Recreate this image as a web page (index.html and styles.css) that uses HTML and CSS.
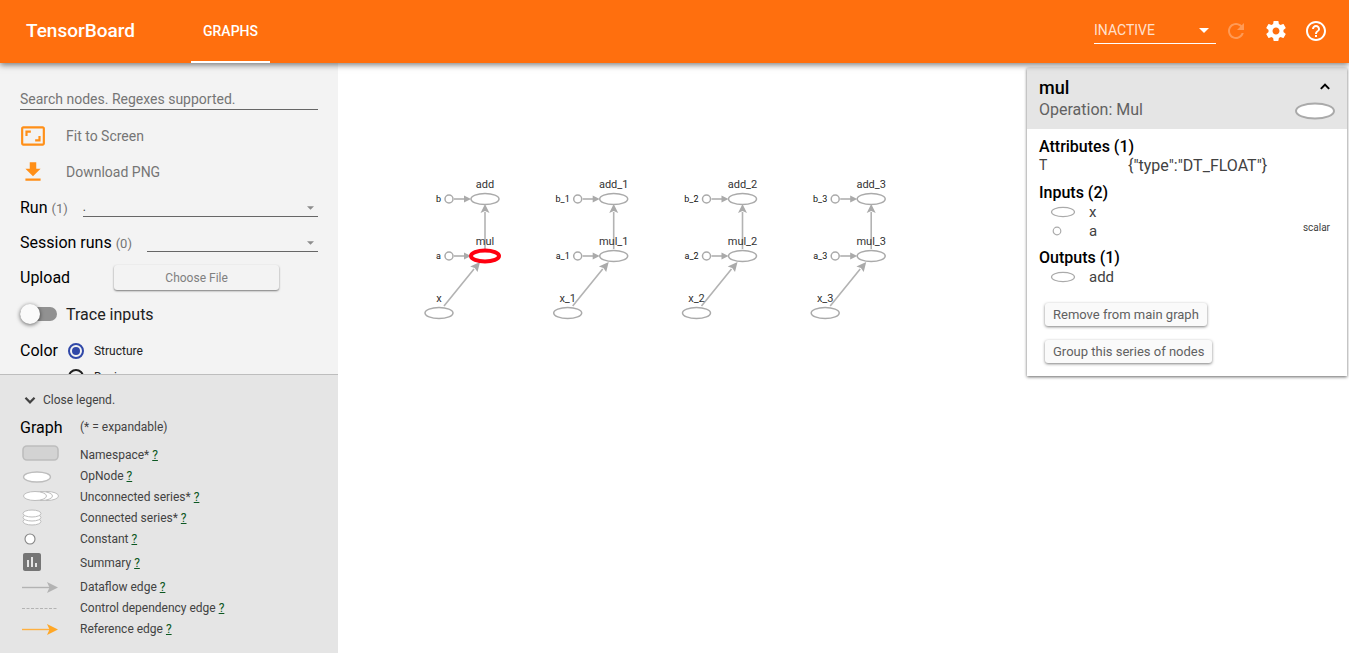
FILE: index.html
```
<!DOCTYPE html>
<html lang="en">
<head>
<meta charset="utf-8">
<title>TensorBoard</title>
<link rel="stylesheet" href="styles.css">
</head>
<body>
<header class="toolbar">
  <h1 class="brand">TensorBoard</h1>
  <nav class="tabs"><a class="tab" href="#graphs">GRAPHS</a></nav>
  <div class="toolbar-actions">
    <div class="select-wrap inactive-wrap">
      <select class="inactive-select" aria-label="Inactive dashboards"><option>INACTIVE</option></select>
      <svg class="caret" width="10" height="5" viewBox="0 0 10 5"><path d="M0 0h10L5 5z" fill="currentColor"/></svg>
    </div>
    <button class="icon-button" aria-label="Reload" disabled><svg width="24" height="24" viewBox="0 0 24 24"><path fill="currentColor" d="M17.65 6.35C16.2 4.9 14.21 4 12 4c-4.42 0-7.99 3.58-7.99 8s3.57 8 7.99 8c3.73 0 6.84-2.55 7.73-6h-2.08c-.82 2.33-3.04 4-5.65 4-3.31 0-6-2.69-6-6s2.69-6 6-6c1.66 0 3.14.69 4.22 1.78L13 11h7V4l-2.35 2.35z"/></svg></button>
    <button class="icon-button" aria-label="Settings"><svg width="24" height="24" viewBox="0 0 24 24"><path fill="currentColor" d="M19.43 12.98c.04-.32.07-.64.07-.98s-.03-.66-.07-.98l2.11-1.65c.19-.15.24-.42.12-.64l-2-3.46c-.12-.22-.39-.3-.61-.22l-2.49 1c-.52-.4-1.08-.73-1.69-.98l-.38-2.65C14.46 2.18 14.25 2 14 2h-4c-.25 0-.46.18-.49.42l-.38 2.65c-.61.25-1.17.59-1.69.98l-2.49-1c-.23-.09-.49 0-.61.22l-2 3.46c-.13.22-.07.49.12.64l2.11 1.65c-.04.32-.07.65-.07.98s.03.66.07.98l-2.11 1.65c-.19.15-.24.42-.12.64l2 3.46c.12.22.39.3.61.22l2.49-1c.52.4 1.08.73 1.69.98l.38 2.65c.03.24.24.42.49.42h4c.25 0 .46-.18.49-.42l.38-2.65c.61-.25 1.17-.59 1.69-.98l2.49 1c.23.09.49 0 .61-.22l2-3.46c.12-.22.07-.49-.12-.64l-2.11-1.65zM12 15.5c-1.93 0-3.5-1.57-3.5-3.5s1.57-3.5 3.5-3.5 3.5 1.57 3.5 3.5-1.57 3.5-3.5 3.5z"/></svg></button>
    <button class="icon-button" aria-label="Help"><svg width="24" height="24" viewBox="0 0 24 24"><path fill="currentColor" d="M11 18h2v-2h-2v2zm1-16C6.48 2 2 6.48 2 12s4.48 10 10 10 10-4.48 10-10S17.52 2 12 2zm0 18c-4.41 0-8-3.59-8-8s3.59-8 8-8 8 3.59 8 8-3.59 8-8 8zm0-14c-2.21 0-4 1.79-4 4h2c0-1.1.9-2 2-2s2 .9 2 2c0 2-3 1.75-3 5h2c0-2.25 3-2.5 3-5 0-2.21-1.79-4-4-4z"/></svg></button>
  </div>
</header>

<div class="dashboard">
  <aside class="sidebar">
    <div class="controls">
      <input class="search" type="text" aria-label="Search nodes" placeholder="Search nodes. Regexes supported.">
      <button class="action"><svg width="26" height="26" viewBox="0 0 24 24"><path fill="currentColor" d="M19 12h-2v3h-3v2h5v-5zM7 9h3V7H5v5h2V9zm14-6H3c-1.100 0-2 .9-2 2v14c0 1.100.9 2 2 2h18c1.100 0 2-.9 2-2V5c0-1.100-.9-2-2-2zm0 16.010H3V4.990h18v14.020z"/></svg>Fit to Screen</button>
      <button class="action"><svg width="26" height="26" viewBox="0 0 24 24"><path fill="currentColor" d="M19 9h-4V3H9v6H5l7 7 7-7zM5 18v2h14v-2H5z"/></svg>Download PNG</button>
      <div class="field">
        <label class="field-label" for="run">Run <span class="count">(1)</span></label>
        <div class="select-wrap run-wrap">
          <select class="picker" id="run"><option>.</option></select>
          <svg class="caret" width="7" height="4" viewBox="0 0 8 4"><path d="M0 0h8L4 4z" fill="currentColor"/></svg>
        </div>
      </div>
      <div class="field">
        <label class="field-label" for="session">Session runs <span class="count">(0)</span></label>
        <div class="select-wrap session-wrap">
          <select class="picker" id="session"><option></option></select>
          <svg class="caret" width="7" height="4" viewBox="0 0 8 4"><path d="M0 0h8L4 4z" fill="currentColor"/></svg>
        </div>
      </div>
      <div class="field upload">
        <span class="field-label">Upload</span>
        <button class="file-button">Choose File</button>
      </div>
      <label class="trace"><input class="toggle" type="checkbox" role="switch">Trace inputs</label>
      <div class="color-field">
        <span class="field-label" id="color-label">Color</span>
        <div class="radios" role="radiogroup" aria-labelledby="color-label">
          <label class="radio-row"><input class="radio" type="radio" name="color" checked>Structure</label>
          <label class="radio-row"><input class="radio" type="radio" name="color">Device</label>
        </div>
      </div>
    </div>
    <section class="legend">
      <button class="legend-toggle"><svg width="16" height="16" viewBox="0 0 24 24"><path fill="currentColor" d="M6.400 7.500L12 13.100l5.600-5.600L20 9.900l-8 8-8-8z"/></svg>Close legend.</button>
      <div class="legend-head"><h2 class="legend-title">Graph</h2><span>(* = expandable)</span></div>
      <ul class="legend-list">
        <li class="legend-item namespace"><svg class="glyph" width="40" height="19" viewBox="0 0 40 19"><rect x="3" y="2" width="35" height="14" rx="4" fill="#d3d3d3" stroke="#bdbdbd" stroke-width="1.600"/></svg><span>Namespace* <a class="help" href="#namespace">?</a></span></li>
        <li class="legend-item"><svg class="glyph" width="40" height="14" viewBox="0 0 40 14"><ellipse cx="17" cy="8" rx="13.500" ry="5" fill="#fff" stroke="#bdbdbd" stroke-width="1.300"/></svg><span>OpNode <a class="help" href="#opnode">?</a></span></li>
        <li class="legend-item"><svg class="glyph" width="40" height="14" viewBox="0 0 40 14"><g fill="#fff" stroke="#bdbdbd"><ellipse cx="27" cy="6" rx="11.500" ry="4.500"/><ellipse cx="21" cy="6" rx="11.500" ry="4.500"/><ellipse cx="15" cy="6" rx="11.500" ry="4.500"/></g></svg><span>Unconnected series* <a class="help" href="#unconnected">?</a></span></li>
        <li class="legend-item"><svg class="glyph" width="40" height="18" viewBox="0 0 40 18"><g fill="#fff" stroke="#bdbdbd"><ellipse cx="12" cy="12.500" rx="9" ry="3.500"/><ellipse cx="12" cy="8.500" rx="9" ry="3.500"/><ellipse cx="12" cy="4.500" rx="9" ry="3.500"/></g></svg><span>Connected series* <a class="help" href="#connected">?</a></span></li>
        <li class="legend-item"><svg class="glyph" width="40" height="14" viewBox="0 0 40 14"><circle cx="10" cy="7" r="5" fill="#fff" stroke="#848484" stroke-width="1.100"/></svg><span>Constant <a class="help" href="#constant">?</a></span></li>
        <li class="legend-item summary"><svg class="glyph" width="40" height="24" viewBox="0 0 40 24"><path fill="#757575" d="M19 2H5c-1.100 0-2 .9-2 2v14c0 1.100.9 2 2 2h14c1.100 0 2-.9 2-2V4c0-1.100-.9-2-2-2z"/><path fill="#e5e5e5" d="M7 9h2v7H7zM11 6h2v10h-2zM15 12h2v4h-2z"/></svg><span>Summary <a class="help" href="#summary">?</a></span></li>
        <li class="legend-item"><svg class="glyph" width="40" height="14" viewBox="0 0 40 14"><path d="M2 7.500h28" stroke="#b3b3b3" stroke-width="1.400"/><path d="M27 2l11 5.500L27 13l2.500-5.500z" fill="#b3b3b3"/></svg><span>Dataflow edge <a class="help" href="#dataflow">?</a></span></li>
        <li class="legend-item"><svg class="glyph" width="40" height="14" viewBox="0 0 40 14"><path d="M2 7.500h36" stroke="#b3b3b3" stroke-width="1.200" stroke-dasharray="3 1.500"/></svg><span>Control dependency edge <a class="help" href="#control">?</a></span></li>
        <li class="legend-item"><svg class="glyph" width="40" height="14" viewBox="0 0 40 14"><path d="M2 7.500h28" stroke="#ffb040" stroke-width="1.400"/><path d="M27 2l11 5.500L27 13l2.500-5.500z" fill="#ffa726"/></svg><span>Reference edge <a class="help" href="#reference">?</a></span></li>
      </ul>
    </section>
  </aside>

  <main class="canvas">
    <svg class="graph" role="img" aria-label="Computation graph">
      <defs>
        <g id="edges">
          <path d="M116 136h13M116 193h13" stroke="#aaa" stroke-width="1.500"/>
          <path d="M126 132.500l7 3.500-7 3.500zM126 189.500l7 3.500-7 3.500z" fill="#aaa"/>
          <path d="M147 186v-37M106 243l30-37" stroke="#b3b3b3" stroke-width="1.600"/>
          <path d="M147 141l4.500 9-4.500-2-4.500 2z" fill="#aaa"/>
          <path d="M142 199l-2.500 10-2.800-4-4.500-1.500z" fill="#aaa"/>
          <g fill="#fff" stroke="#aaa" stroke-width="1.500"><circle cx="111" cy="136" r="4"/><circle cx="111" cy="193" r="4"/><ellipse cx="147" cy="136" rx="14" ry="5.500"/><ellipse cx="101" cy="250" rx="14" ry="5.500"/></g>
        </g>
        <ellipse id="op" cx="147" cy="193" rx="14" ry="5.500"/>
      </defs>
      <g class="node-group">
        <use href="#edges"/><use href="#op" class="op selected"/>
        <text class="name" x="147" y="125">add</text><text class="name" x="147" y="182">mul</text><text class="name" x="101" y="239">x</text>
        <text class="input-name" x="103" y="139">b</text><text class="input-name" x="103" y="196">a</text>
      </g>
      <g class="node-group" transform="translate(128.700 0)">
        <use href="#edges"/><use href="#op" class="op"/>
        <text class="name" x="147" y="125">add_1</text><text class="name" x="147" y="182">mul_1</text><text class="name" x="101" y="239">x_1</text>
        <text class="input-name" x="103" y="139">b_1</text><text class="input-name" x="103" y="196">a_1</text>
      </g>
      <g class="node-group" transform="translate(257.500 0)">
        <use href="#edges"/><use href="#op" class="op"/>
        <text class="name" x="147" y="125">add_2</text><text class="name" x="147" y="182">mul_2</text><text class="name" x="101" y="239">x_2</text>
        <text class="input-name" x="103" y="139">b_2</text><text class="input-name" x="103" y="196">a_2</text>
      </g>
      <g class="node-group" transform="translate(386.200 0)">
        <use href="#edges"/><use href="#op" class="op"/>
        <text class="name" x="147" y="125">add_3</text><text class="name" x="147" y="182">mul_3</text><text class="name" x="101" y="239">x_3</text>
        <text class="input-name" x="103" y="139">b_3</text><text class="input-name" x="103" y="196">a_3</text>
      </g>
    </svg>

    <section class="info">
      <header class="info-head">
        <div>
          <h2 class="info-title">mul</h2>
          <div class="info-sub">Operation: Mul</div>
        </div>
        <div class="info-side">
          <button class="collapse" aria-label="Collapse"><svg width="18" height="18" viewBox="0 0 24 24"><path fill="currentColor" d="M7.410 15.410L12 10.830l4.590 4.580L18.500 13.500 12 7l-6.500 6.500z"/></svg></button>
          <svg width="42" height="20" viewBox="0 0 42 20"><ellipse cx="21" cy="10" rx="19" ry="7.600" fill="#fff" stroke="#aaa" stroke-width="2"/></svg>
        </div>
      </header>
      <div class="info-body">
        <h3 class="info-heading">Attributes (1)</h3>
        <div class="attr"><span class="attr-key">T</span><span class="attr-value">{"type":"DT_FLOAT"}</span></div>
        <h3 class="info-heading">Inputs (2)</h3>
        <div class="io"><svg width="26" height="12" viewBox="0 0 26 12"><ellipse cx="13" cy="6" rx="11.500" ry="4.600" fill="#fff" stroke="#aaa" stroke-width="1.200"/></svg><span>x</span></div>
        <div class="io"><svg width="26" height="12" viewBox="0 0 26 12"><circle cx="7" cy="6" r="3.800" fill="#fff" stroke="#aaa" stroke-width="1.200"/></svg><span>a</span><span class="shape">scalar</span></div>
        <h3 class="info-heading">Outputs (1)</h3>
        <div class="io"><svg width="26" height="12" viewBox="0 0 26 12"><ellipse cx="13" cy="6" rx="11.500" ry="4.600" fill="#fff" stroke="#aaa" stroke-width="1.200"/></svg><span>add</span></div>
        <div class="info-buttons">
          <button class="raised">Remove from main graph</button>
          <button class="raised">Group this series of nodes</button>
        </div>
      </div>
    </section>
  </main>
</div>
</body>
</html>
```
FILE: styles.css
```
* { box-sizing: border-box; }

body {
  margin: 0;
  height: 100vh;
  display: flex;
  flex-direction: column;
  overflow: hidden;
  font-family: Roboto, "Liberation Sans", sans-serif;
  font-size: 12px;
  color: #424242;
  background: #fff;
}

button, input, select { font: inherit; color: inherit; }
button { border: 0; background: none; padding: 0; }
h1, h2, h3, ul { margin: 0; padding: 0; font-weight: 500; }
svg { display: block; flex: none; }

.toolbar {
  position: relative;
  z-index: 2;
  flex: none;
  display: flex;
  align-items: stretch;
  height: 63px;
  padding: 0 20px 0 26px;
  color: #fff;
  background: #ff6f0e;
  box-shadow: 0 2px 6px rgba(0, 0, 0, .5);
}
.brand { align-self: center; padding-bottom: 2px; font-size: 19px; line-height: 24px; }
.tabs { display: flex; margin-left: 56px; }
.tab {
  display: flex;
  align-items: center;
  padding: 0 12px;
  border-bottom: 2px solid #fff;
  color: #fff;
  font-size: 14px;
  font-weight: 500;
  text-decoration: none;
}
.toolbar-actions { display: flex; align-items: center; gap: 16px; margin-left: auto; padding-bottom: 2px; }
.icon-button { color: #fff; }
.icon-button:last-child { margin-right: 1px; }
.icon-button:disabled { color: rgba(255, 255, 255, .3); }

.select-wrap { position: relative; }
.select-wrap .caret { position: absolute; right: 4px; top: 8px; color: #8c8c8c; pointer-events: none; }
.select-wrap select {
  display: block;
  width: 100%;
  appearance: none;
  background: none;
  border: 0;
  border-bottom: 1px solid #666;
  border-radius: 0;
  padding: 0;
}
.inactive-wrap { width: 122px; margin-right: -8px; }
.select-wrap.inactive-wrap .caret { right: 7px; top: 11px; color: #fff; }
.select-wrap .inactive-select { height: 27px; font-size: 14px; color: rgba(255, 255, 255, .8); border-bottom-color: #fff; }

.dashboard { flex: 1; min-height: 0; display: flex; }

.sidebar { flex: none; width: 338px; display: flex; flex-direction: column; background: #f3f3f3; }
.controls { flex: 1; min-height: 0; overflow: hidden; padding: 26px 20px 0; }

.search {
  display: block;
  width: 100%;
  height: 21px;
  margin-bottom: 8px;
  padding: 0;
  border: 0;
  border-bottom: 1px solid #666;
  outline: 0;
  background: none;
  font-size: 14px;
}
.search::placeholder { color: #757575; opacity: 1; }

.action { display: flex; align-items: center; gap: 20px; height: 36px; font-size: 14px; color: #757575; }
.action svg { color: #ff8f17; }

.field { display: flex; align-items: center; gap: 15px; height: 35px; }
.field-label { font-size: 16px; color: #000; white-space: nowrap; }
.count { font-size: 13px; color: #757575; }
.field .select-wrap { flex: 1; }
.picker { height: 19px; font-size: 12px; }
.upload { gap: 44px; }
.file-button {
  width: 165px;
  height: 25px;
  border-radius: 3px;
  color: #808080;
  box-shadow: 0 1px 2px rgba(0, 0, 0, .5);
}

.trace { display: flex; align-items: center; gap: 9px; height: 38px; font-size: 16px; color: #212121; }
.toggle {
  appearance: none;
  display: flex;
  align-items: center;
  width: 37px;
  height: 14px;
  margin: 0;
  border-radius: 7px;
  background: #919191;
}
.toggle::before {
  content: "";
  width: 20px;
  height: 20px;
  border-radius: 50%;
  background: #fafafa;
  box-shadow: 0 1px 4px rgba(0, 0, 0, .6);
}

.color-field { display: flex; align-items: flex-start; gap: 10px; padding-top: 5px; }
.color-field .field-label { line-height: 26px; }
.radio-row { display: flex; align-items: center; gap: 10px; height: 26px; color: #212121; }
.radio {
  appearance: none;
  display: grid;
  place-items: center;
  width: 16px;
  height: 16px;
  margin: 0;
  border: 2px solid #212121;
  border-radius: 50%;
}
.radio:checked { border-color: #3048a8; }
.radio:checked::before { content: ""; width: 8px; height: 8px; border-radius: 50%; background: #3048a8; }

.legend { flex: none; padding: 11px 20px 14px; border-top: 1px solid #bdbdbd; background: #e5e5e5; }
.legend-toggle { display: flex; align-items: center; gap: 5px; height: 28px; padding-left: 2px; }
.legend-head { display: flex; align-items: center; height: 26px; margin-bottom: 4px; }
.legend-title { width: 60px; font-size: 16px; font-weight: 400; color: #000; }
.legend-list { list-style: none; }
.legend-item { display: flex; align-items: center; gap: 20px; height: 21px; font-weight: 400; }
.legend-item.summary { height: 27px; }
.legend-item.namespace .glyph { align-self: flex-start; }
.help { color: #0b5721; }

.canvas { position: relative; flex: 1; min-width: 0; }
.graph { width: 100%; height: 100%; }
.op { fill: #fff; stroke: #aaa; stroke-width: 1.5px; }
.op.selected { stroke: #ff0010; stroke-width: 4px; }
.name { font-size: 11px; text-anchor: middle; fill: #333; }
.input-name { font-size: 9px; text-anchor: end; fill: #111; }

.info {
  position: absolute;
  top: 5px;
  right: 2px;
  width: 320px;
  background: #fff;
  box-shadow: 0 1px 3px rgba(0, 0, 0, .6);
}
.info-head { display: flex; justify-content: space-between; padding: 8px 11px 8px 12px; background: #e5e5e5; }
.info-title { font-size: 18px; line-height: 23px; color: #000; }
.info-sub { font-size: 16px; line-height: 22px; color: #616161; }
.info-side { display: flex; flex-direction: column; align-items: flex-end; justify-content: flex-end; gap: 5px; }
.collapse { padding-right: 2px; color: #000; }
.info-body { padding: 8px 12px 13px; }
.info-heading { font-size: 16px; line-height: 19px; color: #000; }
.attr { display: flex; line-height: 19px; margin-bottom: 8px; }
.attr-key { width: 89px; font-size: 14px; }
.attr-value { font-size: 16px; }
.io { display: flex; align-items: center; gap: 13px; height: 19px; padding: 0 5px 0 11px; font-size: 15px; }
.io + .info-heading { margin-top: 8px; }
.shape { margin-left: auto; align-self: flex-start; font-size: 10px; line-height: 13px; }
.info-buttons { display: flex; flex-direction: column; align-items: flex-start; gap: 14px; padding: 17px 6px 0; }
.raised {
  height: 23px;
  padding: 0 8px;
  border-radius: 3px;
  font-size: 13px;
  color: #616161;
  background: #fafafa;
  box-shadow: 0 1px 3px rgba(0, 0, 0, .5);
}
```
